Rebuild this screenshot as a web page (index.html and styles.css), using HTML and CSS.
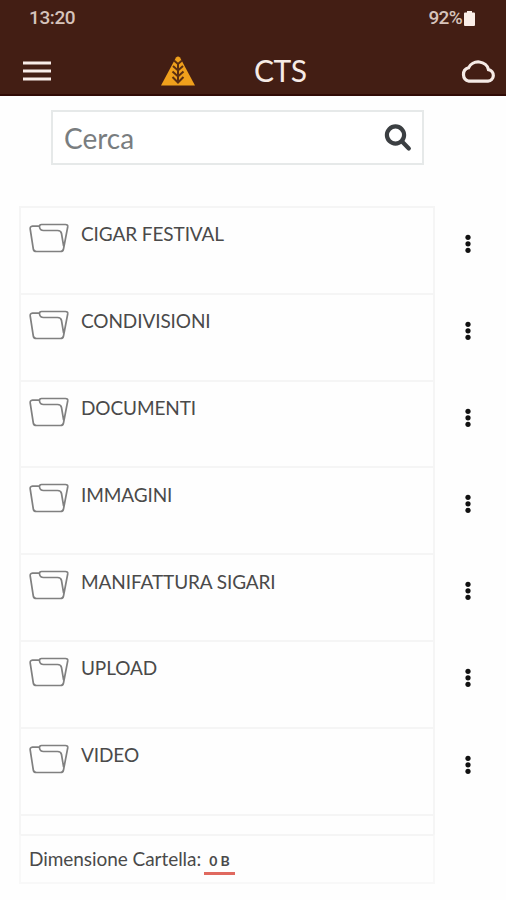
FILE: index.html
```html
<!DOCTYPE html>
<html lang="it">
<head>
<meta charset="utf-8">
<title>CTS</title>
<link rel="stylesheet" href="styles.css">
</head>
<body>
<svg class="defs" aria-hidden="true">
  <symbol id="folder" viewBox="0 0 40 30">
    <path d="M10.500 3.200 H3.500 Q0.800 3.500 1.200 6 L4.300 26 Q4.700 28.500 7.500 28.500 H31.500 Q34 28.500 34.500 26 L38.700 4 Q39.100 1.500 36.500 1.500 H12.500 Q10.300 1.500 10.500 4 Q11 7.500 14.500 7.500 H28.500 Q32 7.500 32.500 10.500 L34.600 23"/>
  </symbol>
  <symbol id="dots" viewBox="0 0 6 20">
    <circle cx="3" cy="3.3" r="2.600"/><circle cx="3" cy="9.8" r="2.600"/><circle cx="3" cy="16.3" r="2.600"/>
  </symbol>
</svg>
<header class="top">
  <div class="status">
    <span class="time">13:20</span>
    <span class="power">92%</span>
    <svg class="battery" viewBox="0 0 11 15"><path d="M3 0H8V1.500H10Q11 1.500 11 2.500V14Q11 15 10 15H1Q0 15 0 14V2.500Q0 1.500 1 1.500H3Z"/></svg>
  </div>
  <nav class="bar">
    <svg class="menu" viewBox="0 0 28 20"><path d="M0 2H28M0 10H28M0 18H28"/></svg>
    <svg class="logo" viewBox="0 0 34 30">
      <path class="tri" d="M15 1.500Q17-0.500 19 1.500L34 29.500H0Z"/>
      <path class="ear" d="M17 8V27M13 4.500L17 8L21 4.500M12 10L17 14.500L22 10M11.500 15.500L17 20.500L22.500 15.500M11.500 21L17 26.500L22.500 21"/>
    </svg>
    <h1 class="title">CTS</h1>
    <svg class="cloud" viewBox="0 0 36 26"><path d="M9 23.200H28A5.800 5.800 0 0 0 28.500 11.700A10.500 9.500 0 0 0 8.500 9.800A6.900 6.900 0 0 0 9 23.200Z"/></svg>
  </nav>
</header>
<main>
  <div class="search">
    <span>Cerca</span>
    <svg class="lens" viewBox="0 0 28 28"><circle cx="11.500" cy="11" r="8.600"/><path d="M18.500 18L24.800 24.500"/></svg>
  </div>
  <ul class="list">
    <li class="row"><div class="cell"><svg class="folder"><use href="#folder"/></svg><span class="name">CIGAR FESTIVAL</span></div><svg class="dots"><use href="#dots"/></svg></li>
    <li class="row"><div class="cell"><svg class="folder"><use href="#folder"/></svg><span class="name">CONDIVISIONI</span></div><svg class="dots"><use href="#dots"/></svg></li>
    <li class="row"><div class="cell"><svg class="folder"><use href="#folder"/></svg><span class="name">DOCUMENTI</span></div><svg class="dots"><use href="#dots"/></svg></li>
    <li class="row"><div class="cell"><svg class="folder"><use href="#folder"/></svg><span class="name">IMMAGINI</span></div><svg class="dots"><use href="#dots"/></svg></li>
    <li class="row"><div class="cell"><svg class="folder"><use href="#folder"/></svg><span class="name">MANIFATTURA SIGARI</span></div><svg class="dots"><use href="#dots"/></svg></li>
    <li class="row"><div class="cell"><svg class="folder"><use href="#folder"/></svg><span class="name">UPLOAD</span></div><svg class="dots"><use href="#dots"/></svg></li>
    <li class="row"><div class="cell"><svg class="folder"><use href="#folder"/></svg><span class="name">VIDEO</span></div><svg class="dots"><use href="#dots"/></svg></li>
  </ul>
  <div class="spacer"></div>
  <footer class="total"><span>Dimensione Cartella:</span><b class="size">0 B</b></footer>
</main>
</body>
</html>
```
FILE: styles.css
```css
* { box-sizing: border-box; }
body {
  margin: 0;
  height: 900px;
  overflow: hidden;
  background: #fefefe;
  color: #4a4a4a;
  font-family: Lato, sans-serif;
}
svg { display: block; flex: none; }
.defs { position: absolute; width: 0; height: 0; }
.top {
  height: 96px;
  background: #431e14;
  border-bottom: 2px solid #300b06;
}
.status {
  display: flex;
  height: 36px;
  padding: 0 31px 0 29px;
  align-items: center;
  color: #d6c3bb;
  font: 500 19px/36px Roboto, sans-serif;
}
.time { letter-spacing: -0.4px; }
.power { margin-left: auto; letter-spacing: -0.7px; }
.battery { width: 11px; height: 15px; margin-left: 2px; fill: #faeee8; }
.bar { display: flex; height: 58px; padding: 0 10px 0 23px; }
.menu { width: 28px; height: 20px; margin-top: 25px; stroke: #f8ece8; stroke-width: 3.2; }
.logo { width: 34px; height: 30px; margin: 20px 0 0 110px; }
.tri { fill: #f0a01c; }
.ear { fill: none; stroke: #5a2e12; stroke-width: 2; }
.title {
  margin: 16px 0 0 59px;
  color: #f6ebe6;
  font-size: 30px;
  font-weight: 400;
  line-height: 36px;
  letter-spacing: -0.5px;
}
.cloud {
  width: 36px;
  height: 26px;
  margin: 22px 0 0 auto;
  fill: none;
  stroke: #f6ebe6;
  stroke-width: 3.2;
}
.search {
  display: flex;
  align-items: center;
  width: 373px;
  height: 55px;
  margin: 14px 0 41px 51px;
  padding: 0 10px 0 11px;
  border: 2px solid #e6e9e9;
  background: #fff;
  color: #797d7f;
  font-size: 28px;
}
.lens {
  width: 28px;
  height: 28px;
  margin-left: auto;
  fill: none;
  stroke: #3b3f42;
  stroke-width: 4.2;
  stroke-linecap: round;
}
.list { margin: 0; padding: 0; list-style: none; }
.row { display: flex; height: 86.8px; }
.cell {
  display: flex;
  width: 416px;
  margin-left: 19px;
  padding: 14px 0 0 8px;
  border: 2px solid #f5f5f5;
  border-bottom: 0;
}
.folder {
  width: 40px;
  height: 30px;
  margin-top: 1px;
  fill: none;
  stroke: #808080;
  stroke-width: 1.7;
  stroke-linejoin: round;
}
.name {
  margin: 0.400px 0 0 12px;
  font-size: 19px;
  line-height: 24px;
  letter-spacing: -0.1px;
  white-space: nowrap;
}
.dots { width: 6px; height: 20px; margin: 28px 0 0 30px; fill: #111; }
.spacer {
  width: 416px;
  height: 20px;
  margin-left: 19px;
  border: 2px solid #f5f5f5;
  border-bottom: 0;
}
.total {
  display: flex;
  width: 416px;
  height: 50px;
  margin-left: 19px;
  padding-left: 8px;
  border: 2px solid #f8f8f8;
  border-top-color: #f5f5f5;
  font-size: 19px;
  line-height: 45px;
  letter-spacing: -0.05px;
}
.size {
  height: 27px;
  margin: 12px 0 0 3px;
  padding: 0 5px;
  border-bottom: 3px solid #e0695f;
  font-size: 14px;
  line-height: 25px;
}
```
